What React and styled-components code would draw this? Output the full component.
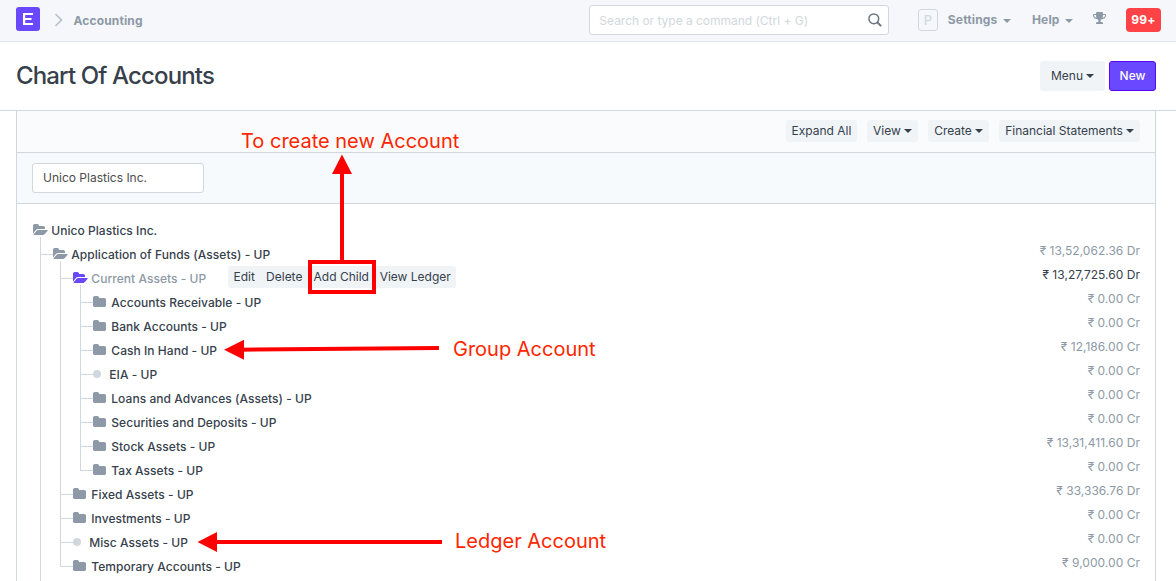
import React from 'react';
import styled, { createGlobalStyle, css } from 'styled-components';

const c = {
  text: '#36414c',
  muted: '#8d99a6',
  line: '#d1d8dd',
  button: '#f0f4f7',
  primary: '#6a48ff',
  note: '#ff2600',
};

const GlobalStyle = createGlobalStyle`
  * { box-sizing: border-box; }
  body {
    margin: 0;
    background: #fff;
    color: ${c.text};
    font: 12px/17px Inter, "Liberation Sans", sans-serif;
    overflow: hidden;
  }
`;

const Page = styled.div`
  position: relative;
  width: 1176px;
  height: 581px;
  overflow: hidden;
  display: flex;
  flex-direction: column;
`;

const Navbar = styled.header`
  height: 42px;
  flex: none;
  display: flex;
  align-items: flex-start;
  padding: 0 15px 0 16px;
  background: #f5f7fa;
  border-bottom: 1px solid #e4e9ee;
  color: ${c.muted};
  font-weight: 700;
`;

const Logo = styled.div`
  width: 24px;
  height: 24px;
  margin-top: 7px;
  border-radius: 3px;
  background: ${c.primary};
  svg { display: block; }
`;

const Chevron = styled.svg`
  margin: 13px 0 0 14px;
`;

const Crumb = styled.span`
  margin: 12px 0 0 10.5px;
  letter-spacing: 0.13px;
`;

const Search = styled.div`
  width: 300px;
  height: 30px;
  margin: 5px 29px 0 auto;
  padding: 0 6px 0 9.5px;
  display: flex;
  align-items: center;
  justify-content: space-between;
  background: #fff;
  border: 1px solid ${c.line};
  border-radius: 3px;
  color: #d1d8dd;
  font-weight: 400;
  letter-spacing: -0.02px;
`;

const Avatar = styled.div`
  width: 20px;
  height: 22px;
  margin: 9px 10px 0 0;
  border: 1px solid ${c.line};
  border-radius: 3px;
  color: ${c.line};
  font-size: 13px;
  font-weight: 500;
  line-height: 21px;
  text-align: center;
`;

const NavLink = styled.div`
  margin: 11px ${p => p.$gap}px 0 0;
  display: flex;
  align-items: center;
  gap: 5.5px;
  letter-spacing: 0.15px;
`;

const Caret = styled.span`
  width: 0;
  height: 0;
  border: 4px solid transparent;
  border-top-color: currentColor;
  border-bottom: 0;
  margin-top: 2px;
`;

const Trophy = styled.svg`
  margin: 11px 19px 0 0;
  fill: ${c.muted};
`;

const Badge = styled.div`
  width: 35px;
  height: 24px;
  margin-top: 8px;
  border-radius: 4px;
  background: #ff4245;
  color: #fff;
  line-height: 24px;
  text-align: center;
  letter-spacing: 0.2px;
`;

const PageHead = styled.div`
  height: 69px;
  flex: none;
  display: flex;
  align-items: center;
  padding: 0 20px 0 16px;
  border-bottom: 1px solid ${c.line};
`;

const Title = styled.h1`
  margin: 0 auto 0 0;
  font-size: 24px;
  line-height: 30px;
  font-weight: 500;
  letter-spacing: -0.86px;
`;

const Button = styled.button`
  height: ${p => (p.$large ? 30 : 22)}px;
  width: ${p => p.$width}px;
  padding: 0 0 2px;
  margin-left: ${p => p.$gap || 0}px;
  display: flex;
  align-items: center;
  justify-content: center;
  gap: 3px;
  border: 0;
  border-radius: 3px;
  background: ${c.button};
  color: ${c.text};
  font: inherit;
  letter-spacing: 0;
  ${p => p.$primary && css`
    background: ${c.primary};
    border: 1px solid #5509ff;
    color: #fff;
    font-weight: 500;
  `}
`;

const Panel = styled.main`
  flex: 1;
  min-height: 0;
  margin: 0 20px 0 16px;
  border: solid ${c.line};
  border-width: 0 1px;
`;

const Toolbar = styled.div`
  height: 42px;
  padding: 9px 15px 0 0;
  display: flex;
  justify-content: flex-end;
  gap: 10px;
  background: #fafbfc;
  border-bottom: 1px solid ${c.line};
`;

const Filters = styled.div`
  height: 51px;
  padding: 10px 15px;
  background: #f7fafc;
  border-bottom: 1px solid ${c.line};
`;

const Company = styled.div`
  width: 172px;
  height: 30px;
  padding: 0 10px;
  background: #fff;
  border: 1px solid ${c.line};
  border-radius: 3px;
  color: #4c4c4c;
  line-height: 28px;
  letter-spacing: 0;
`;

const Tree = styled.div`
  padding: 14px 15px 0 16px;
`;

const Row = styled.div`
  height: 24px;
  display: flex;
  align-items: stretch;
  padding-left: ${p => (p.$depth ? 7 : 0)}px;
`;

const Guide = styled.span`
  width: 20px;
  flex: none;
  border-left: 1px solid ${c.line};
`;

const Elbow = styled.span`
  width: 13px;
  flex: none;
  display: flex;
  flex-direction: column;
  &::before {
    content: '';
    height: 12px;
    border: solid ${c.line};
    border-width: 0 0 1px 1px;
  }
  &::after {
    content: '';
    flex: 1;
    border-left: ${p => (p.$last ? 0 : 1)}px solid ${c.line};
  }
`;

const IconCell = styled.span`
  width: ${p => (p.$leaf ? 16.3 : 18.3)}px;
  flex: none;
  display: flex;
  flex-direction: column;
  padding-top: ${p => (p.$leaf ? 8 : 5)}px;
`;

const Folder = styled.svg`
  flex: none;
  fill: ${p => (p.$active ? c.primary : c.muted)};
`;

const Stub = styled.span`
  flex: 1;
  margin-left: 7px;
  border-left: 1px solid ${c.line};
`;

const Dot = styled.span`
  width: 8px;
  height: 8px;
  border-radius: 50%;
  background: ${c.line};
`;

const Name = styled.span`
  line-height: 25px;
  font-weight: 500;
  letter-spacing: 0.04px;
  color: ${p => (p.$active ? c.muted : c.text)};
  white-space: nowrap;
`;

const Actions = styled.div`
  display: flex;
  height: 22px;
  margin-left: 21.5px;
  border-radius: 3px;
  background: ${c.button};
`;

const Action = styled.span`
  width: ${p => p.$width}px;
  text-align: center;
  line-height: 22px;
  letter-spacing: 0;
`;

const Balance = styled.span`
  margin-left: auto;
  line-height: 18px;
  letter-spacing: 0.03px;
  color: ${p => (p.$active ? c.text : c.muted)};
`;

const Notes = styled.div`
  position: absolute;
  inset: 0;
  pointer-events: none;
`;

const Arrows = styled.svg`
  position: absolute;
  inset: 0;
`;

const Note = styled.span`
  position: absolute;
  left: ${p => p.$x}px;
  top: ${p => p.$y}px;
  color: ${c.note};
  font-size: 20px;
  line-height: 24px;
  letter-spacing: 0;
  white-space: nowrap;
`;

const CLOSED = 'M1664 608v704q0 92-66 158t-158 66h-1216q-92 0-158-66t-66-158v-960q0-92 66-158t158-66h320q92 0 158 66t66 158v32h672q92 0 158 66t66 158z';
const OPEN = 'M1879 952q0 31-31 66l-336 396q-43 51-120.5 86.5t-143.5 35.5h-1088q-34 0-60.5-13t-26.5-43q0-31 31-66l336-396q43-51 120.5-86.5t143.5-35.5h1088q34 0 60.5 13t26.5 43zM1536 608v160h-832q-94 0-197 47.5t-164 119.5l-337 396-5 6q0-4-.5-12.5t-.5-12.5v-960q0-92 66-158t158-66h320q92 0 158 66t66 158v32h544q92 0 158 66t66 158z';
const TROPHY = 'M458 898q-74-162-74-386h-256v96q0 78 94.5 162t235.5 128zM1536 608v-96h-256q0 224-74 386 141-44 235.5-128t94.5-162zM1664 480v128q0 71-41.5 143t-112 130-173 97.5-215.5 44.5q-42 54-95 95-38 34-52.5 72.5t-14.5 89.5q0 54 30.5 91t97.5 37q75 0 133.5 45.5t58.5 114.5v64q0 14-9 23t-23 9h-832q-14 0-23-9t-9-23v-64q0-69 58.5-114.5t133.5-45.5q67 0 97.5-37t30.5-91q0-51-14.5-89.5t-52.5-72.5q-53-41-95-95-113-5-215.5-44.5t-173-97.5-112-130-41.5-143v-128q0-40 28-68t68-28h288v-96q0-66 47-113t113-47h576q66 0 113 47t47 113v96h288q40 0 68 28t28 68z';

const accounts = [
  { name: 'Unico Plastics Inc.', depth: 0, kind: 'open' },
  { name: 'Application of Funds (Assets) - UP', depth: 1, kind: 'open', balance: '₹ 13,52,062.36 Dr' },
  { name: 'Current Assets - UP', depth: 2, kind: 'open', balance: '₹ 13,27,725.60 Dr', active: true },
  { name: 'Accounts Receivable - UP', depth: 3, kind: 'closed', balance: '₹ 0.00 Cr' },
  { name: 'Bank Accounts - UP', depth: 3, kind: 'closed', balance: '₹ 0.00 Cr' },
  { name: 'Cash In Hand - UP', depth: 3, kind: 'closed', balance: '₹ 12,186.00 Cr' },
  { name: 'EIA - UP', depth: 3, kind: 'leaf', balance: '₹ 0.00 Cr' },
  { name: 'Loans and Advances (Assets) - UP', depth: 3, kind: 'closed', balance: '₹ 0.00 Cr' },
  { name: 'Securities and Deposits - UP', depth: 3, kind: 'closed', balance: '₹ 0.00 Cr' },
  { name: 'Stock Assets - UP', depth: 3, kind: 'closed', balance: '₹ 13,31,411.60 Dr' },
  { name: 'Tax Assets - UP', depth: 3, kind: 'closed', balance: '₹ 0.00 Cr', last: true },
  { name: 'Fixed Assets - UP', depth: 2, kind: 'closed', balance: '₹ 33,336.76 Dr' },
  { name: 'Investments - UP', depth: 2, kind: 'closed', balance: '₹ 0.00 Cr' },
  { name: 'Misc Assets - UP', depth: 2, kind: 'leaf', balance: '₹ 0.00 Cr' },
  { name: 'Temporary Accounts - UP', depth: 2, kind: 'closed', balance: '₹ 9,000.00 Cr', last: true },
];

function Account({ name, depth, kind, balance, active, last }) {
  return (
    <Row $depth={depth}>
      {Array.from({ length: Math.max(0, depth - 1) }, (_, i) => <Guide key={i} />)}
      {depth > 0 && <Elbow $last={last} />}
      <IconCell $leaf={kind === 'leaf'}>
        {kind === 'leaf' ? <Dot /> : (
          <Folder $active={active} width="15" height="14" viewBox="0 0 1920 1792">
            <path d={kind === 'open' ? OPEN : CLOSED} />
          </Folder>
        )}
        {kind === 'open' && <Stub />}
      </IconCell>
      <Name $active={active}>{name}</Name>
      {active && (
        <Actions>
          <Action $width={33}>Edit</Action>
          <Action $width={47}>Delete</Action>
          <Action $width={67}>Add Child</Action>
          <Action $width={81}>View Ledger</Action>
        </Actions>
      )}
      {balance && <Balance $active={active}>{balance}</Balance>}
    </Row>
  );
}

export default function App() {
  return (
    <Page>
      <GlobalStyle />
      <Navbar>
        <Logo>
          <svg width="24" height="24" viewBox="0 0 24 24" fill="none" stroke="#fff" strokeWidth="2.2">
            <path d="M17 7H8.1v10H17M8 12h7.5" />
          </svg>
        </Logo>
        <Chevron width="9" height="14" viewBox="0 0 9 14" fill="none" stroke="#b8c2cc" strokeWidth="1.7">
          <path d="M1.5 1l6 6-6 6" />
        </Chevron>
        <Crumb>Accounting</Crumb>
        <Search>
          Search or type a command (Ctrl + G)
          <svg width="14" height="14" viewBox="0 0 14 14" fill="none" stroke="#6c7680">
            <circle cx="5.8" cy="5.8" r="4.9" strokeWidth="1.5" />
            <path d="M9.3 9.3l3.8 3.8" strokeWidth="2" />
          </svg>
        </Search>
        <Avatar>P</Avatar>
        <NavLink $gap={21}>Settings <Caret /></NavLink>
        <NavLink $gap={20}>Help <Caret /></NavLink>
        <Trophy width="14" height="14" viewBox="0 0 1792 1792"><path d={TROPHY} /></Trophy>
        <Badge>99+</Badge>
      </Navbar>
      <PageHead>
        <Title>Chart Of Accounts</Title>
        <Button $large $width={65}>Menu <Caret /></Button>
        <Button $large $primary $width={47} $gap={4}>New</Button>
      </PageHead>
      <Panel>
        <Toolbar>
          <Button $width={71}>Expand All</Button>
          <Button $width={51}>View <Caret /></Button>
          <Button $width={61}>Create <Caret /></Button>
          <Button $width={141}>Financial Statements <Caret /></Button>
        </Toolbar>
        <Filters>
          <Company>Unico Plastics Inc.</Company>
        </Filters>
        <Tree>
          {accounts.map(a => <Account key={a.name} {...a} />)}
          <Row $depth={1}><Guide /></Row>
        </Tree>
      </Panel>
      <Notes>
        <Arrows width="1176" height="581" fill="#f00" stroke="#f00">
          <rect x="310" y="262" width="64" height="30" fill="none" strokeWidth="4" />
          <path d="M342 262V170" strokeWidth="4" />
          <path d="M342 154.500l10 19.500h-20z" stroke="none" />
          <path d="M439 348L240 349.700" strokeWidth="4" />
          <path d="M224 349.700l20-10v20z" stroke="none" />
          <path d="M442 542H214" strokeWidth="4" />
          <path d="M197.500 542l19.500-10v20z" stroke="none" />
        </Arrows>
        <Note $x={241} $y={129}>To create new Account</Note>
        <Note $x={453} $y={337}>Group Account</Note>
        <Note $x={455} $y={529}>Ledger Account</Note>
      </Notes>
    </Page>
  );
}
